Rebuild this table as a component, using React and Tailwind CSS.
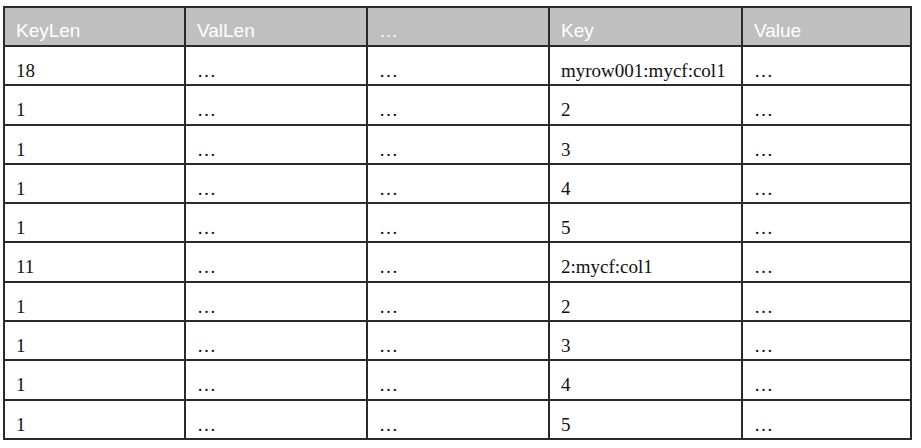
import React from 'react';

const headers = ["KeyLen", "ValLen", "…", "Key", "Value"];

const rows = [
  ["18", "…", "…", "myrow001:mycf:col1", "…"],
  ["1", "…", "…", "2", "…"],
  ["1", "…", "…", "3", "…"],
  ["1", "…", "…", "4", "…"],
  ["1", "…", "…", "5", "…"],
  ["11", "…", "…", "2:mycf:col1", "…"],
  ["1", "…", "…", "2", "…"],
  ["1", "…", "…", "3", "…"],
  ["1", "…", "…", "4", "…"],
  ["1", "…", "…", "5", "…"],
];

const widths = ["w-[181px]", "w-[182px]", "w-[182px]", "w-[193px]", "w-[169px]"];

export default function App() {
  return (
    <div className="w-[921px] h-[448px] bg-white pl-[3px] pt-[6px]">
      <table className="table-fixed border-collapse border-2 border-[#222] w-[909px]">
        <thead>
          <tr className="h-[39px] bg-[#bfbfbf]">
            {headers.map((h, i) => (
              <th
                key={i}
                className={`${widths[i]} border-2 border-[#2a2a2a] align-top pt-[13px] pl-[11px] text-left font-normal text-white text-[19px] leading-[19px] font-['Liberation_Sans',Arial,sans-serif]`}
              >
                {h}
              </th>
            ))}
          </tr>
        </thead>
        <tbody>
          {rows.map((r, ri) => (
            <tr key={ri} className="h-[39.3px]">
              {r.map((c, ci) => (
                <td
                  key={ci}
                  className="border-2 border-[#2a2a2a] align-top pt-[14px] pl-[11px] text-[#111] text-[19px] leading-[19px] font-['Liberation_Serif','Times_New_Roman',serif] whitespace-nowrap"
                >
                  {c}
                </td>
              ))}
            </tr>
          ))}
        </tbody>
      </table>
    </div>
  );
}
